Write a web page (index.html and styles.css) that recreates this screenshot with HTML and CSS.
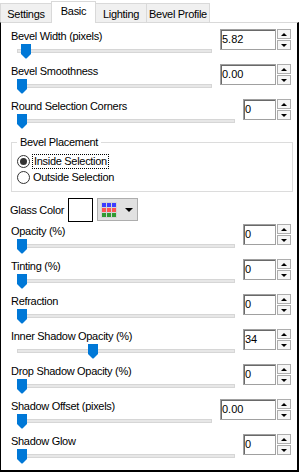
FILE: index.html
```html
<!DOCTYPE html>
<html lang="en">
<head>
  <meta charset="UTF-8" />
  <title>Bevel</title>
  <link rel="stylesheet" href="styles.css">
</head>
<body>
  <div class="window">
    <div class="tabs">
      <div class="tab tab-settings">Settings</div>
      <div class="tab tab-basic active">Basic</div>
      <div class="tab tab-lighting">Lighting</div>
      <div class="tab tab-profile">Bevel Profile</div>
    </div>

    <div class="panel">
      <div class="row first">
        <span class="lbl">Bevel Width (pixels)</span>
        <div class="slider"><div class="track"></div><svg class="thumb" style="left:4px" width="10" height="15" viewBox="0 0 10 15"><path d="M0 0H10V10L5.5 14.5H4.5L0 10Z"/></svg></div>
        <div class="spin"><div class="val wide">5.82</div><div class="btns"><span class="up"></span><span class="down"></span></div></div>
      </div>

      <div class="row">
        <span class="lbl">Bevel Smoothness</span>
        <div class="slider"><div class="track"></div><svg class="thumb" style="left:0px" width="10" height="15" viewBox="0 0 10 15"><path d="M0 0H10V10L5.5 14.5H4.5L0 10Z"/></svg></div>
        <div class="spin"><div class="val wide">0.00</div><div class="btns"><span class="up"></span><span class="down"></span></div></div>
      </div>

      <div class="row">
        <span class="lbl">Round Selection Corners</span>
        <div class="slider"><div class="track"></div><svg class="thumb" style="left:0px" width="10" height="15" viewBox="0 0 10 15"><path d="M0 0H10V10L5.5 14.5H4.5L0 10Z"/></svg></div>
        <div class="spin"><div class="val">0</div><div class="btns"><span class="up"></span><span class="down"></span></div></div>
      </div>

      <fieldset class="group">
        <legend>Bevel Placement</legend>
        <div class="radio"><span class="dot on"></span><span class="focus">Inside Selection</span></div>
        <div class="radio"><span class="dot"></span><span class="rtext">Outside Selection</span></div>
      </fieldset>

      <div class="glass">
        <span class="glass-lbl">Glass Color</span>
        <div class="swatch"></div>
        <div class="pick">
          <svg width="16" height="16" viewBox="0 0 16 16">
            <rect width="16" height="16" fill="#d4d4d4"/>
            <rect x="1" y="1" width="4" height="4" fill="#3d3dff"/>
            <rect x="6" y="1" width="4" height="4" fill="#3d3dff"/>
            <rect x="11" y="1" width="4" height="4" fill="#3d3dff"/>
            <rect x="1" y="6" width="4" height="4" fill="#ff5252"/>
            <rect x="6" y="6" width="4" height="4" fill="#ff5252"/>
            <rect x="11" y="6" width="4" height="4" fill="#ff5252"/>
            <rect x="1" y="11" width="4" height="4" fill="#329a32"/>
            <rect x="6" y="11" width="4" height="4" fill="#329a32"/>
            <rect x="11" y="11" width="4" height="4" fill="#329a32"/>
          </svg>
          <span class="caret"></span>
        </div>
      </div>

      <div class="row">
        <span class="lbl">Opacity (%)</span>
        <div class="slider"><div class="track"></div><svg class="thumb" style="left:0px" width="10" height="15" viewBox="0 0 10 15"><path d="M0 0H10V10L5.5 14.5H4.5L0 10Z"/></svg></div>
        <div class="spin"><div class="val">0</div><div class="btns"><span class="up"></span><span class="down"></span></div></div>
      </div>

      <div class="row">
        <span class="lbl">Tinting (%)</span>
        <div class="slider"><div class="track"></div><svg class="thumb" style="left:0px" width="10" height="15" viewBox="0 0 10 15"><path d="M0 0H10V10L5.5 14.5H4.5L0 10Z"/></svg></div>
        <div class="spin"><div class="val">0</div><div class="btns"><span class="up"></span><span class="down"></span></div></div>
      </div>

      <div class="row">
        <span class="lbl">Refraction</span>
        <div class="slider"><div class="track"></div><svg class="thumb" style="left:0px" width="10" height="15" viewBox="0 0 10 15"><path d="M0 0H10V10L5.5 14.5H4.5L0 10Z"/></svg></div>
        <div class="spin"><div class="val">0</div><div class="btns"><span class="up"></span><span class="down"></span></div></div>
      </div>

      <div class="row">
        <span class="lbl">Inner Shadow Opacity (%)</span>
        <div class="slider"><div class="track"></div><svg class="thumb" style="left:71px" width="10" height="15" viewBox="0 0 10 15"><path d="M0 0H10V10L5.5 14.5H4.5L0 10Z"/></svg></div>
        <div class="spin"><div class="val">34</div><div class="btns"><span class="up"></span><span class="down"></span></div></div>
      </div>

      <div class="row">
        <span class="lbl">Drop Shadow Opacity (%)</span>
        <div class="slider"><div class="track"></div><svg class="thumb" style="left:0px" width="10" height="15" viewBox="0 0 10 15"><path d="M0 0H10V10L5.5 14.5H4.5L0 10Z"/></svg></div>
        <div class="spin"><div class="val">0</div><div class="btns"><span class="up"></span><span class="down"></span></div></div>
      </div>

      <div class="row">
        <span class="lbl">Shadow Offset (pixels)</span>
        <div class="slider"><div class="track"></div><svg class="thumb" style="left:0px" width="10" height="15" viewBox="0 0 10 15"><path d="M0 0H10V10L5.5 14.5H4.5L0 10Z"/></svg></div>
        <div class="spin"><div class="val wide">0.00</div><div class="btns"><span class="up"></span><span class="down"></span></div></div>
      </div>

      <div class="row">
        <span class="lbl">Shadow Glow</span>
        <div class="slider"><div class="track"></div><svg class="thumb" style="left:0px" width="10" height="15" viewBox="0 0 10 15"><path d="M0 0H10V10L5.5 14.5H4.5L0 10Z"/></svg></div>
        <div class="spin"><div class="val">0</div><div class="btns"><span class="up"></span><span class="down"></span></div></div>
      </div>
    </div>
  </div>
</body>
</html>
```

FILE: styles.css
```css
body {
  margin: 0; background: #fff; color: #000;
  font-family: "Liberation Sans", Arial, sans-serif; font-size: 11px; letter-spacing: -0.3px;
}
.window { width: 299px; height: 473px; }

/* tab strip */
.tabs { display: flex; align-items: flex-end; height: 22px; }
.tab {
  box-sizing: border-box; height: 19px; padding-top: 3px; line-height: 14px;
  text-align: center; white-space: nowrap;
  background: #f0f0f0; border: 1px solid #d9d9d9; border-bottom: none; margin-right: -1px;
}
.tab.active {
  height: 22px; padding-top: 2px; margin-bottom: -1px;
  background: #fff; position: relative; z-index: 1;
}
.tab-settings { width: 52px; }
.tab-basic { width: 45px; }
.tab-lighting { width: 52px; }
.tab-profile { width: 64px; }

.panel {
  box-sizing: border-box; height: 450px; padding: 0 6px 0 10px;
  border-top: 1px solid #d9d9d9; border-left: 1px solid #000;
  border-right: 2px solid #000; border-bottom: 2px solid #000;
}

/* label + slider + spin rows */
.row {
  display: grid; grid-template-columns: 1fr auto; grid-template-rows: 15px 20px;
  column-gap: 8px;
}
.row.first { margin-top: 6px; }
.lbl { grid-column: 1; grid-row: 1; line-height: 14px; white-space: nowrap; }
.slider { grid-column: 1; grid-row: 2; position: relative; margin-left: 6px; }
.track {
  margin-top: 5px; height: 2px;
  background: #e7e7e7; border: 1px solid #d6d6d6;
}
.thumb { position: absolute; top: 0; fill: #0078d7; }

.spin { grid-column: 2; grid-row: 1 / 3; align-self: start; display: flex; height: 21px; }
.val {
  box-sizing: border-box; width: 33px; height: 21px; padding-left: 1px; line-height: 19px;
  border: 1px solid #a0a0a0; box-shadow: inset 1px 1px 0 #696969;
  letter-spacing: 0;
}
.val.wide { width: 56px; }
.btns { display: flex; flex-direction: column; gap: 1px; width: 14px; margin-left: 1px; }
.btns span {
  flex: 1; box-sizing: border-box; border: 1px solid #adadad; background: #f6f6f6;
  display: flex; align-items: center; justify-content: center;
}
.btns .up::after {
  content: ""; border-left: 3px solid transparent; border-right: 3px solid transparent;
  border-bottom: 3px solid #000;
}
.btns .down::after {
  content: ""; border-left: 3px solid transparent; border-right: 3px solid transparent;
  border-top: 3px solid #000;
}

/* Bevel Placement group */
.group {
  margin: 1px -2px 0 0; padding: 4px 0 6px 5px;
  border: 1px solid #dcdcdc; min-width: 0;
}
.group legend { padding: 0 3px; line-height: 14px; }
.radio { display: flex; align-items: center; height: 16px; }
.dot {
  box-sizing: border-box; width: 13px; height: 13px; border: 1px solid #333;
  border-radius: 50%; display: flex; align-items: center; justify-content: center;
}
.dot.on::after { content: ""; width: 7px; height: 7px; border-radius: 50%; background: #333; }
.focus { margin-left: 2px; padding: 0 1px; line-height: 13px; border: 1px dotted #000; }
.rtext { margin-left: 3px; }

/* Glass color */
.glass { display: flex; align-items: flex-start; height: 24px; margin: 6px 0 2px -1px; }
.glass-lbl { width: 58px; line-height: 24px; }
.swatch { box-sizing: border-box; width: 25px; height: 24px; border: 1px solid #000; background: #fff; }
.pick {
  box-sizing: border-box; width: 41px; height: 23px; margin-left: 4px; padding-left: 3px;
  background: #e1e1e1; border: 1px solid #adadad;
  display: flex; align-items: center;
}
.caret {
  margin-left: 8px; border-left: 4px solid transparent; border-right: 4px solid transparent;
  border-top: 4px solid #000;
}
```
